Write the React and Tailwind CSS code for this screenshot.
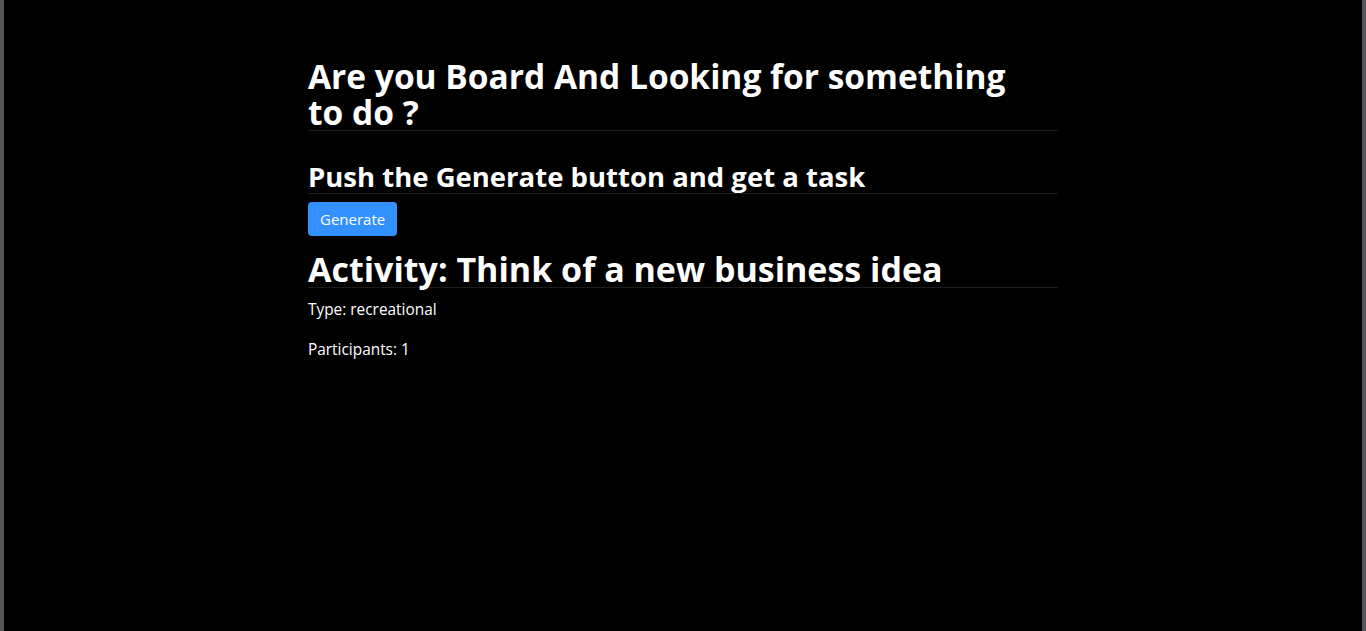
export default function App() {
  return (
    <div className="min-h-[631px] w-full bg-black border-x-4 border-[#55565b] text-white" style={{ fontFamily: '"Open Sans", "Noto Sans", sans-serif' }}>
      <div className="w-[750px] ml-[304px] pt-[58px]">
        <h1 className="text-[33.5px] font-bold leading-[36px] border-b border-[#1c1c1c]">Are you Board And Looking for something<br />to do ?</h1>
        <h2 className="text-[27.5px] font-bold leading-[32px] border-b border-[#1c1c1c] mt-[30px]">Push the Generate button and get a task</h2>
        <button className="mt-2 bg-[#3390ff] text-white text-[15px] rounded px-3 h-[34px]">Generate</button>
        <h1 className="text-[34px] font-bold leading-[36px] border-b border-[#1c1c1c] mt-[15px]">Activity: Think of a new business idea</h1>
        <p className="text-[15.4px] mt-[12px] leading-[20px]">Type: recreational</p>
        <p className="text-[15.4px] mt-[20px] leading-[20px]">Participants: 1</p>
      </div>
    </div>
  );
}
